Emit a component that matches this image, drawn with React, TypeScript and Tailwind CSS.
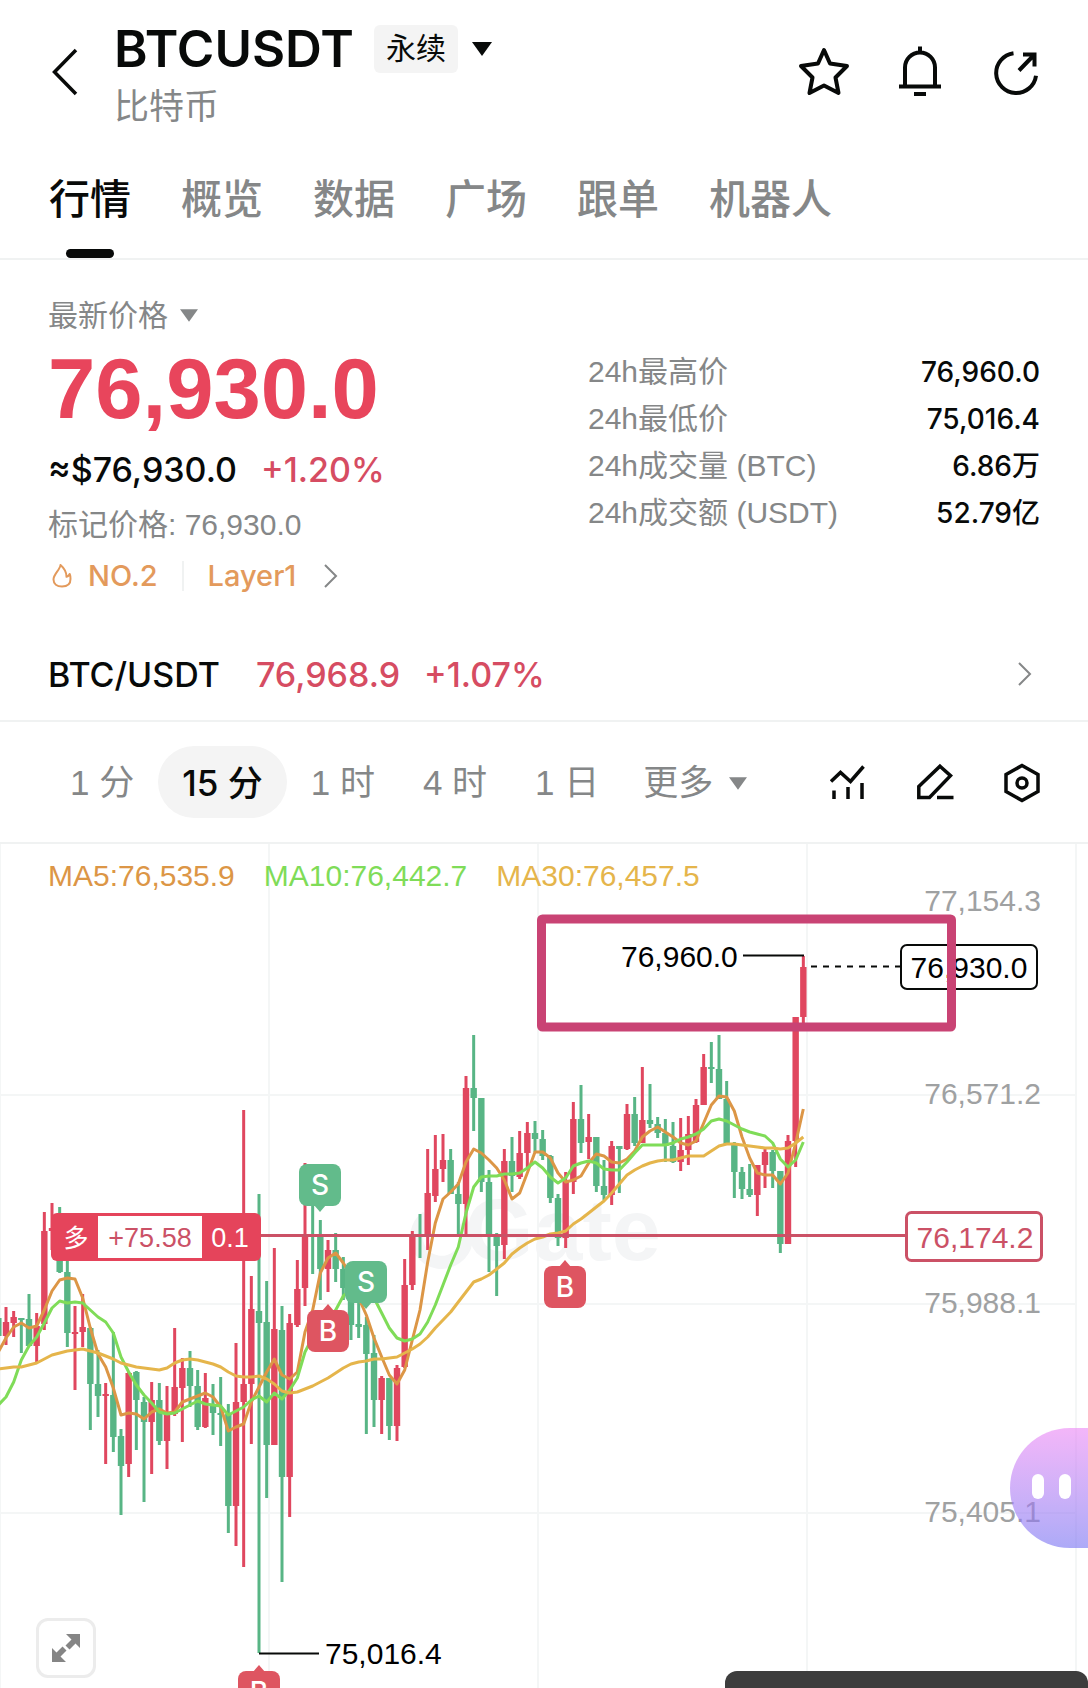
import { useState } from "react";

const UP = "#e0475f";
const DOWN = "#58b585";

const TABS = ["行情", "概览", "数据", "广场", "跟单", "机器人"];

const STATS = [
  { label: "24h最高价", value: "76,960.0" },
  { label: "24h最低价", value: "75,016.4" },
  { label: "24h成交量 (BTC)", value: "6.86万" },
  { label: "24h成交额 (USDT)", value: "52.79亿" },
];

const INTERVALS = ["1 分", "15 分", "1 时", "4 时", "1 日"];

const AXIS = [
  { y: 900, label: "77,154.3" },
  { y: 1093, label: "76,571.2" },
  { y: 1302, label: "75,988.1" },
  { y: 1511, label: "75,405.1" },
];

// direction, high, body top, body bottom, low
type Candle = [0 | 1, number, number, number, number];

const CANDLES: Candle[] = [
  [0, 1318, 1318, 1336, 1336],
  [1, 1307, 1322, 1336, 1345],
  [1, 1311, 1317, 1323, 1337],
  [0, 1318, 1318, 1320, 1353],
  [0, 1294, 1319, 1346, 1346],
  [1, 1313, 1326, 1346, 1362],
  [1, 1212, 1231, 1324, 1330],
  [1, 1203, 1228, 1231, 1250],
  [0, 1207, 1231, 1272, 1273],
  [0, 1255, 1272, 1333, 1347],
  [1, 1306, 1332, 1334, 1390],
  [1, 1294, 1327, 1332, 1347],
  [0, 1327, 1328, 1384, 1430],
  [0, 1350, 1384, 1396, 1417],
  [1, 1383, 1394, 1396, 1464],
  [0, 1332, 1395, 1437, 1452],
  [0, 1429, 1436, 1466, 1515],
  [1, 1372, 1373, 1464, 1477],
  [0, 1371, 1372, 1400, 1450],
  [0, 1397, 1402, 1422, 1502],
  [1, 1382, 1400, 1422, 1474],
  [0, 1383, 1400, 1441, 1445],
  [1, 1386, 1414, 1441, 1469],
  [1, 1328, 1387, 1414, 1416],
  [1, 1358, 1368, 1388, 1442],
  [0, 1351, 1368, 1386, 1407],
  [0, 1370, 1386, 1427, 1430],
  [1, 1373, 1398, 1427, 1428],
  [0, 1384, 1404, 1413, 1435],
  [0, 1377, 1413, 1415, 1446],
  [0, 1404, 1414, 1506, 1533],
  [1, 1343, 1402, 1506, 1546],
  [1, 1110, 1384, 1402, 1567],
  [1, 1276, 1309, 1384, 1444],
  [0, 1194, 1311, 1323, 1653],
  [0, 1281, 1322, 1445, 1498],
  [1, 1248, 1329, 1445, 1445],
  [0, 1306, 1330, 1477, 1582],
  [1, 1314, 1323, 1477, 1517],
  [1, 1260, 1289, 1325, 1327],
  [1, 1163, 1235, 1288, 1306],
  [0, 1169, 1234, 1236, 1274],
  [0, 1220, 1237, 1269, 1300],
  [1, 1240, 1250, 1269, 1292],
  [0, 1233, 1250, 1269, 1282],
  [0, 1257, 1269, 1288, 1300],
  [0, 1285, 1290, 1325, 1340],
  [0, 1290, 1324, 1327, 1338],
  [0, 1317, 1325, 1354, 1434],
  [0, 1335, 1353, 1400, 1427],
  [1, 1376, 1378, 1400, 1434],
  [0, 1378, 1378, 1426, 1440],
  [1, 1365, 1368, 1426, 1441],
  [1, 1259, 1285, 1367, 1368],
  [1, 1231, 1235, 1285, 1290],
  [0, 1214, 1235, 1237, 1258],
  [1, 1149, 1193, 1236, 1250],
  [1, 1135, 1169, 1196, 1202],
  [1, 1134, 1160, 1169, 1182],
  [0, 1149, 1160, 1194, 1194],
  [0, 1182, 1194, 1204, 1234],
  [1, 1076, 1088, 1204, 1235],
  [0, 1035, 1088, 1098, 1131],
  [0, 1098, 1098, 1182, 1192],
  [0, 1170, 1182, 1236, 1272],
  [0, 1233, 1237, 1246, 1296],
  [1, 1149, 1161, 1245, 1259],
  [0, 1137, 1161, 1176, 1192],
  [1, 1131, 1153, 1177, 1179],
  [1, 1122, 1133, 1153, 1167],
  [0, 1121, 1133, 1139, 1152],
  [0, 1130, 1139, 1156, 1160],
  [0, 1155, 1156, 1198, 1203],
  [0, 1194, 1198, 1238, 1246],
  [1, 1172, 1180, 1238, 1248],
  [1, 1102, 1119, 1182, 1194],
  [0, 1085, 1119, 1143, 1153],
  [1, 1114, 1137, 1142, 1159],
  [0, 1137, 1137, 1186, 1192],
  [0, 1160, 1186, 1195, 1200],
  [1, 1141, 1146, 1195, 1205],
  [0, 1146, 1146, 1149, 1193],
  [1, 1104, 1114, 1149, 1150],
  [0, 1097, 1114, 1143, 1146],
  [1, 1067, 1120, 1143, 1143],
  [0, 1084, 1120, 1124, 1128],
  [0, 1117, 1124, 1133, 1138],
  [0, 1119, 1133, 1146, 1162],
  [0, 1122, 1146, 1162, 1163],
  [1, 1118, 1150, 1162, 1171],
  [1, 1116, 1134, 1150, 1165],
  [1, 1099, 1105, 1142, 1143],
  [1, 1054, 1067, 1105, 1105],
  [0, 1042, 1067, 1069, 1083],
  [0, 1035, 1069, 1099, 1099],
  [0, 1081, 1099, 1144, 1144],
  [0, 1142, 1144, 1172, 1198],
  [0, 1167, 1172, 1189, 1199],
  [0, 1164, 1189, 1195, 1197],
  [1, 1165, 1165, 1195, 1216],
  [1, 1149, 1152, 1165, 1188],
  [0, 1150, 1152, 1171, 1188],
  [0, 1171, 1171, 1244, 1253],
  [1, 1135, 1141, 1244, 1244],
  [1, 1017, 1017, 1141, 1167],
  [1, 956, 967, 1017, 1023],
];

const MA5 = [
  1352, 1338, 1327, 1323, 1328, 1326, 1310, 1291, 1280, 1278, 1279, 1298, 1328, 1354, 1367, 1388, 1415, 1413, 1414, 1419, 1412, 1409,
  1413, 1412, 1402, 1399, 1396, 1393, 1397, 1407, 1431, 1427, 1424, 1402, 1387, 1372, 1359, 1375, 1379, 1372, 1332, 1310, 1273, 1258,
  1253, 1263, 1275, 1298, 1315, 1338, 1357, 1375, 1384, 1370, 1340, 1310, 1262, 1223, 1199, 1192, 1184, 1162, 1149, 1153, 1160, 1168,
  1180, 1199, 1193, 1173, 1152, 1152, 1158, 1173, 1182, 1180, 1176, 1163, 1154, 1156, 1162, 1163, 1159, 1151, 1137, 1131, 1127, 1132,
  1137, 1143, 1145, 1141, 1123, 1105, 1096, 1097, 1111, 1137, 1158, 1173, 1175, 1175, 1184, 1173, 1143, 1109,
];

const MA10 = [
  1405, 1397, 1382, 1360, 1346, 1337, 1323, 1308, 1301, 1303, 1302, 1303, 1310, 1317, 1322, 1333, 1357, 1372, 1385, 1395, 1403, 1412,
  1414, 1413, 1409, 1405, 1401, 1404, 1405, 1406, 1415, 1411, 1407, 1400, 1396, 1402, 1393, 1399, 1390, 1378, 1352, 1337, 1328, 1320,
  1310, 1296, 1290, 1288, 1290, 1298, 1313, 1328, 1338, 1341, 1339, 1334, 1322, 1305, 1285, 1265, 1247, 1213, 1187, 1177, 1176, 1176,
  1174, 1174, 1173, 1168, 1162, 1168, 1177, 1183, 1178, 1166, 1163, 1161, 1163, 1169, 1170, 1170, 1162, 1153, 1145, 1145, 1145, 1145,
  1143, 1139, 1137, 1134, 1129, 1121, 1119, 1121, 1125, 1129, 1132, 1134, 1136, 1143, 1159, 1167, 1160, 1142,
];

const MA30 = [
  1369, 1368, 1367, 1367, 1365, 1363, 1359, 1355, 1353, 1351, 1350, 1349, 1351, 1353, 1356, 1359, 1363, 1365, 1367, 1368, 1369, 1370,
  1368, 1363, 1360, 1359, 1360, 1362, 1364, 1367, 1372, 1376, 1377, 1377, 1376, 1379, 1384, 1391, 1393, 1392, 1389, 1386, 1382, 1378,
  1373, 1368, 1364, 1362, 1361, 1359, 1359, 1358, 1357, 1353, 1349, 1344, 1337, 1328, 1320, 1312, 1302, 1292, 1282, 1279, 1275, 1269,
  1263, 1254, 1248, 1243, 1239, 1237, 1234, 1233, 1231, 1224, 1219, 1213, 1207, 1201, 1193, 1184, 1175, 1170, 1166, 1163, 1161, 1160,
  1160, 1158, 1156, 1156, 1156, 1151, 1146, 1144, 1144, 1145, 1146, 1147, 1148, 1148, 1149, 1148, 1143, 1137,
];

const candleX = (i: number) => 6 + ((i - 1) * 23) / 3;

const toPoints = (values: number[]) => values.map((v, i) => `${candleX(i).toFixed(1)},${v}`).join(" ");

function Caret({ className }: { className: string }) {
  return (
    <svg className={className} viewBox="0 0 20 14" fill="currentColor" aria-hidden="true">
      <path d="M0 0h20L10 14z" />
    </svg>
  );
}

function ChevronRight() {
  return (
    <svg className="w-[14px] h-6" viewBox="0 0 14 24" fill="none" stroke="#858788" strokeWidth={2} aria-hidden="true">
      <path d="M1 1l11 11L1 23" />
    </svg>
  );
}

function Header() {
  return (
    <header className="flex items-start px-12 pt-6 h-[137px]">
      <button aria-label="返回" className="w-[66px] h-24 shrink-0 flex items-center">
        <svg className="w-8 h-12" viewBox="0 0 32 48" fill="none" stroke="#080a09" strokeWidth={3.5}>
          <path d="M28 2L6.500 24L28 46" />
        </svg>
      </button>
      <div className="flex-1 min-w-0">
        <div className="flex items-center h-[50px]">
          <h1 className="text-[51px] leading-[50px] font-semibold font-[Inter,sans-serif]">BTCUSDT</h1>
          <button className="ml-5 flex items-center gap-[14px]">
            <span className="h-12 px-3 rounded-md bg-[#f4f4f4] text-[30px] leading-[48px]">永续</span>
            <Caret className="w-5 h-[14px]" />
          </button>
        </div>
        <p className="mt-2 text-[35px] leading-[50px] text-[#858788]">比特币</p>
      </div>
      <div className="h-24 flex items-center gap-12">
        <button aria-label="收藏">
          <svg className="w-12 h-12 overflow-visible" viewBox="0 0 48 48" fill="none" stroke="currentColor" strokeWidth={4} strokeLinejoin="round">
            <path d="M24 2l6 13.500 17 2.500-11.500 11.500 3 15.500L24 37.500 9.500 45l3-15.500L1 18l17-2.500z" />
          </svg>
        </button>
        <button aria-label="提醒">
          <svg className="w-12 h-12 overflow-visible" viewBox="0 0 48 48" fill="none" stroke="currentColor" strokeWidth={4}>
            <path d="M9 38V19.500a15 15 0 0 1 30 0V38M3 38.500h42M24-1.500V5M18 46h12" />
          </svg>
        </button>
        <button aria-label="分享">
          <svg className="w-12 h-12" viewBox="0 0 48 48" fill="none" stroke="currentColor" strokeWidth={4}>
            <path d="M21.500 5.200A20 20 0 1 0 44 27.700M27 22.500L42 7M31 6.500h11.500V18.500" />
          </svg>
        </button>
      </div>
    </header>
  );
}

function TabBar() {
  const [active, setActive] = useState(TABS[0]);
  return (
    <nav className="flex gap-[50px] px-[49px] border-b-2 border-[#f0f2f2]">
      {TABS.map((tab) => (
        <button
          key={tab}
          onClick={() => setActive(tab)}
          className={`relative h-[121px] pt-[6px] text-[41px] font-medium ${tab === active ? "text-[#080a09]" : "text-[#858788]"}`}
        >
          {tab}
          {tab === active && <span className="absolute bottom-0 left-1/2 -ml-6 w-12 h-[9px] rounded-full bg-[#080a09]" />}
        </button>
      ))}
    </nav>
  );
}

function PriceSummary() {
  return (
    <section className="flex justify-between px-12 pt-[35px] pb-7">
      <div>
        <button className="flex items-center gap-3 h-10 text-[30px] text-[#858788]">
          最新价格
          <Caret className="w-[18px] h-[13px]" />
        </button>
        <p className="text-[85px] leading-[107px] font-bold text-[#e8455c]">76,930.0</p>
        <p className="flex gap-6 text-[34px] leading-[56px] font-medium font-[Inter,sans-serif]">
          <span>≈$76,930.0</span>
          <span className="text-[#d64c62]">+1.20%</span>
        </p>
        <p className="text-[30px] leading-[54px] text-[#858788]">标记价格: 76,930.0</p>
        <a href="#rank" className="flex items-center h-12 text-[29px] font-medium font-[Inter,sans-serif] text-[#e39a5c]">
          <svg className="ml-1 mr-4 w-5 h-6" viewBox="0 0 20 24" fill="none" stroke="currentColor" strokeWidth={2} strokeLinejoin="round">
            <path d="M8.500 1C8 6 1.500 10 1.500 15.500c0 4.500 3.500 7 8.500 7s8.500-2.500 8.500-7.500c0-2-.3-3.800-.8-5-.8 1.500-1.800 2.300-3.200 2.800C14.500 8 12 4 8.500 1z" />
          </svg>
          NO.2
          <span className="mx-6 w-[2px] h-[30px] bg-[#f0f2f2]" />
          <span className="mr-7">Layer1</span>
          <ChevronRight />
        </a>
      </div>
      <dl className="w-[452px] mt-[53px] leading-[47px]">
        {STATS.map((s) => (
          <div key={s.label} className="flex justify-between">
            <dt className="text-[30px] text-[#858788]">{s.label}</dt>
            <dd className="pt-px text-[28px] leading-[46px] font-medium font-[Inter,'Noto_Sans_CJK_SC',sans-serif]">{s.value}</dd>
          </div>
        ))}
      </dl>
    </section>
  );
}

function SpotRow() {
  return (
    <a
      href="#spot"
      className="flex items-center h-[94px] pl-12 pr-14 text-[34px] font-medium font-[Inter,sans-serif] border-b-2 border-[#f0f2f2]"
    >
      <span>BTC/USDT</span>
      <span className="ml-9 text-[#d64c62]">76,968.9</span>
      <span className="ml-6 mr-auto text-[#d64c62]">+1.07%</span>
      <ChevronRight />
    </a>
  );
}

function IntervalBar() {
  const [active, setActive] = useState("15 分");
  return (
    <div className="flex items-center justify-between h-[122px] pl-[46px] pr-12 border-b-2 border-[#f0f2f2]">
      <div className="flex items-center text-[35px] text-[#858788]">
        {INTERVALS.map((it) => (
          <button
            key={it}
            onClick={() => setActive(it)}
            className={`h-[72px] px-6 pt-[2px] rounded-full ${
              it === active ? "bg-[#f4f4f4] font-medium font-[Inter,'Noto_Sans_CJK_SC',sans-serif] text-[#080a09]" : ""
            }`}
          >
            {it}
          </button>
        ))}
        <button className="flex items-center gap-4 h-[72px] pl-5 pt-[2px]">
          更多
          <Caret className="w-[18px] h-[13px]" />
        </button>
      </div>
      <div className="flex items-center gap-[51px]">
        <button aria-label="指标">
          <svg className="w-9 h-9" viewBox="0 0 36 36" fill="none" stroke="currentColor" strokeWidth={3.5}>
            <path d="M1 17.500l9.500-9L20.500 17.500 33.500 2.500M4 26.500V35M18 23v12M32 19v16" />
          </svg>
        </button>
        <button aria-label="画线">
          <svg className="w-9 h-9 overflow-visible" viewBox="0 0 36 36" fill="none" stroke="currentColor" strokeWidth={3.5}>
            <path d="M23 2.200l10.500 9.500L12.500 33.500H1.800V22.500zM20 33.500h16.500" />
          </svg>
        </button>
        <button aria-label="设置">
          <svg className="w-9 h-9 overflow-visible" viewBox="0 0 36 36" fill="none" stroke="currentColor" strokeWidth={3.5}>
            <path d="M18 1.500l16 9v17l-16 9-16-9v-17z" />
            <circle cx={18} cy={19} r={5} />
          </svg>
        </button>
      </div>
    </div>
  );
}

function TradeMarker({ x, y, side }: { x: number; y: number; side: "S" | "B" }) {
  const fill = side === "S" ? "#62bb8b" : "#de5561";
  // the pointer sits under a sell marker and over a buy marker
  const tip = side === "S" ? `M${x - 6} ${y + 20}h12l-6 7z` : `M${x - 6} ${y - 20}h12l-6-7z`;
  return (
    <g>
      <rect x={x - 21} y={y - 21} width={42} height={42} rx={8} fill={fill} />
      <path d={tip} fill={fill} />
      <text x={x} y={y + 10} textAnchor="middle" fill="#fff" className="text-[28px] font-medium font-[Inter,sans-serif]">
        {side}
      </text>
    </g>
  );
}

function CandleChart() {
  return (
    <svg className="block w-full" viewBox="0 844 1088 844" role="img" aria-label="BTCUSDT 15分 K线">
      <g stroke="#f4f6f6" strokeWidth={2}>
        {[0, 269, 538, 807, 1076].map((x) => (
          <path key={x} d={`M${x} 844V1688`} />
        ))}
        {[1095, 1304, 1513].map((y) => (
          <path key={y} d={`M0 ${y}H1076`} />
        ))}
      </g>

      <g fill="#f4f5f6">
        <path d="M427 1217a25 25 0 1 0 35 6" fill="none" stroke="#f4f5f6" strokeWidth={13} />
        <text x={465} y={1260} className="text-[88px] font-bold">
          Gate
        </text>
      </g>

      {CANDLES.map(([up, high, top, bottom, low], i) => {
        const x = candleX(i);
        return (
          <g key={i} fill={up ? UP : DOWN}>
            <rect x={x - 1.5} y={high} width={3} height={low - high} />
            <rect x={x - 3.2} y={top} width={6.4} height={bottom - top} />
          </g>
        );
      })}

      <g fill="none" strokeWidth={3} strokeLinejoin="round">
        <polyline points={toPoints(MA5)} stroke="#dc9646" />
        <polyline points={toPoints(MA10)} stroke="#7fdc58" />
        <polyline points={toPoints(MA30)} stroke="#e5b54b" />
      </g>

      <g fill="#9fa1a2" textAnchor="end" className="text-[30px]">
        {AXIS.map((a) => (
          <text key={a.label} x={1041} y={a.y + 11}>
            {a.label}
          </text>
        ))}
      </g>

      <path d="M261 1235.500H905" stroke="#cb5166" strokeWidth={3} />

      <TradeMarker x={320} y={1185} side="S" />
      <TradeMarker x={366} y={1282} side="S" />
      <TradeMarker x={328} y={1331} side="B" />
      <TradeMarker x={565} y={1287} side="B" />
      <TradeMarker x={259} y={1692} side="B" />

      {/* open position */}
      <rect x={51} y={1213} width={210} height={48} rx={6} fill="#e5445b" />
      <rect x={98} y={1216} width={104} height={42} fill="#fff" />
      <g className="text-[27px]" textAnchor="middle">
        <text x={76} y={1247} fill="#fff" className="text-[25px]">
          多
        </text>
        <text x={150} y={1247} fill="#cb5166">
          +75.58
        </text>
        <text x={230} y={1247} fill="#fff">
          0.1
        </text>
      </g>
      <rect x={906.5} y={1212.5} width={135} height={48} rx={5} fill="#fff" stroke="#cb5166" strokeWidth={3} />
      <text x={975} y={1248} textAnchor="middle" fill="#cb5166" className="text-[30px]">
        76,174.2
      </text>

      {/* session high and low */}
      <path d="M743 955.500h61M259 1653.500h60" stroke="#080a09" strokeWidth={2} />
      <text x={621} y={967} className="text-[30px]">
        76,960.0
      </text>
      <text x={325} y={1664} className="text-[30px]">
        75,016.4
      </text>

      {/* last price */}
      <path d="M811 966.500h90" stroke="#080a09" strokeWidth={2} strokeDasharray="6 6" />
      <rect x={901} y={945} width={136} height={44} rx={6} fill="#fff" stroke="#080a09" strokeWidth={2} />
      <text x={969} y={978} textAnchor="middle" className="text-[30px]">
        76,930.0
      </text>

      <rect x={541.5} y={919} width={410} height={108} rx={1} fill="none" stroke="#c94374" strokeWidth={9} strokeLinejoin="round" />
    </svg>
  );
}

export default function App() {
  return (
    <div className="min-h-screen overflow-hidden bg-white text-[#080a09] font-['Liberation_Sans','Noto_Sans_CJK_SC',sans-serif]">
      <Header />
      <TabBar />
      <PriceSummary />
      <SpotRow />
      <IntervalBar />
      <main className="relative overflow-hidden">
        <CandleChart />
        <div className="absolute top-[14px] left-12 flex gap-[29px] text-[30px] leading-9">
          <span className="text-[#dc9646]">MA5:76,535.9</span>
          <span className="text-[#7fdc58]">MA10:76,442.7</span>
          <span className="text-[#e5b54b]">MA30:76,457.5</span>
        </div>
        <button
          aria-label="全屏"
          className="absolute left-9 bottom-[10px] w-[60px] h-[60px] flex items-center justify-center rounded-xl border-3 border-[#ececec] bg-white"
        >
          <svg className="w-7 h-7" viewBox="0 0 28 28" fill="#858585">
            <path d="M14 0h14v14l-4.500-4.500-6 6-4-4 6-6zM0 14l4.500 4.500 6-6 4 4-6 6L14 28H0z" />
          </svg>
        </button>
        <button
          aria-label="智能助手"
          className="absolute right-0 bottom-[140px] w-[78px] h-[120px] flex items-center gap-[15px] pl-[22px] pb-1 rounded-l-full bg-linear-to-b from-[#eb85f5]/60 to-[#7671f2]/60"
        >
          <span className="w-3 h-[25px] rounded-full bg-white" />
          <span className="w-3 h-[25px] rounded-full bg-white" />
        </button>
        <div className="absolute right-0 bottom-0 w-1/3 h-[17px] rounded-t-xl bg-[#3d3d3d]" />
      </main>
    </div>
  );
}
